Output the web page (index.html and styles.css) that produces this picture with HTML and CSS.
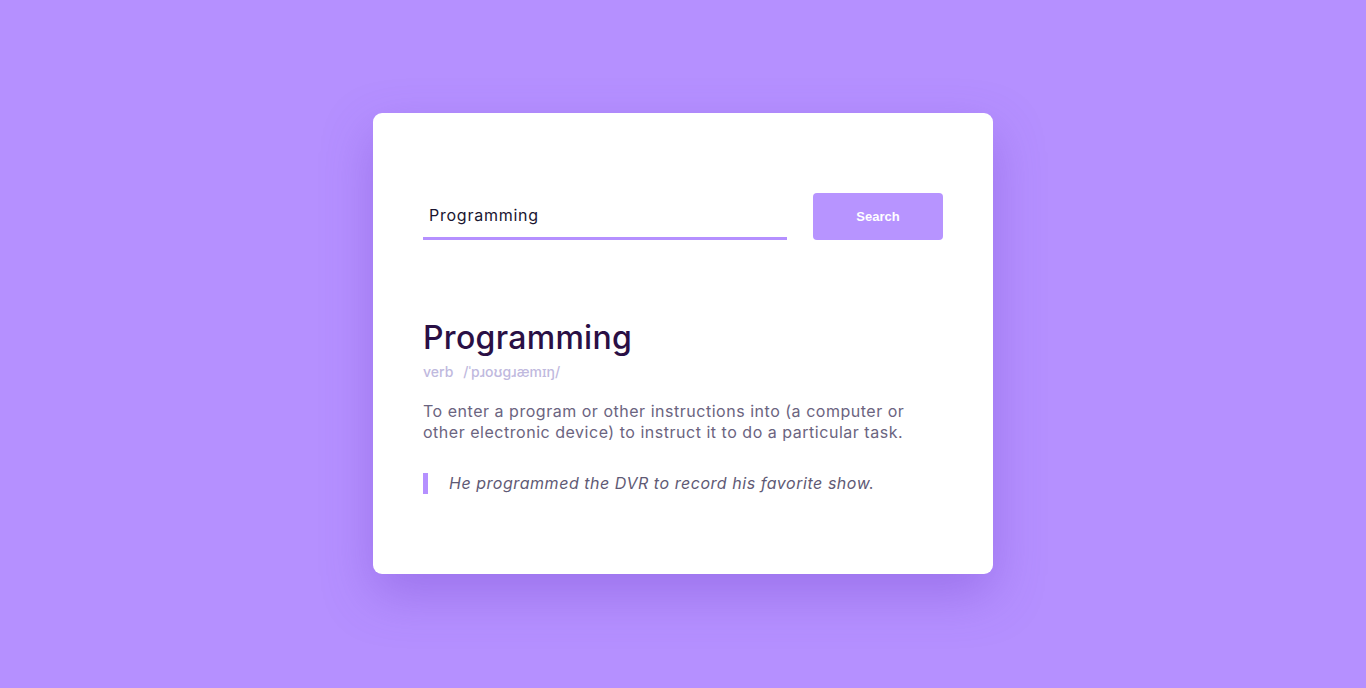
FILE: index.html
```html
<!DOCTYPE html>
<html lang="en">
<head>
<meta charset="utf-8">
<title>Dictionary</title>
<link rel="stylesheet" href="styles.css">
</head>
<body>
<main class="page">
  <section class="card">
    <form class="search">
      <div class="field"><input class="input" type="text" value="Programming"></div>
      <button class="btn" type="button">Search</button>
    </form>
    <article class="result">
      <h1 class="word">Programming</h1>
      <div class="meta"><span class="pos">verb</span><span class="ipa">/ˈpɹoʊɡɹæmɪŋ/</span></div>
      <p class="def">To enter a program or other instructions into (a computer or other electronic device) to instruct it to do a particular task.</p>
      <blockquote class="example">He programmed the DVR to record his favorite show.</blockquote>
    </article>
  </section>
</main>
</body>
</html>
```
FILE: styles.css
```css
* { box-sizing: border-box; }
html, body { margin: 0; height: 100%; }
body {
  background: #b590ff;
  font-family: Inter, "Noto Sans", sans-serif;
}
.page {
  height: 688px;
  display: flex;
  justify-content: center;
  padding-top: 113px;
}
.card {
  width: 620px;
  height: 461px;
  background: #fff;
  border-radius: 9px;
  padding: 80px 50px 0;
  box-shadow: 0 20px 50px rgba(110, 60, 200, 0.35);
}
.search {
  display: flex;
  gap: 26px;
  align-items: flex-start;
}
.field { flex: 1; }
.input {
  width: 100%;
  height: 47px;
  border: none;
  border-bottom: 3px solid #b590ff;
  padding: 0 6px;
  font-family: inherit;
  font-size: 16px;
  letter-spacing: 0.75px;
  color: #1a1530;
  outline: none;
  background: transparent;
}
.btn {
  width: 130px;
  height: 47px;
  border: none;
  border-radius: 4px;
  background: #b794ff;
  color: #fff;
  font-family: "Liberation Sans", Arial, sans-serif;
  font-weight: bold;
  font-size: 13px;
}
.result { margin-top: 78px; }
.word {
  margin: 0;
  font-size: 32px;
  line-height: 40px;
  font-weight: 500;
  letter-spacing: 0.3px;
  color: #2a0f45;
}
.meta {
  margin-top: 5px;
  display: flex;
  gap: 10px;
  font-size: 14px;
  line-height: 18px;
  font-weight: 500;
  color: #c0b9de;
}
.def {
  margin: 20px 0 0;
  font-size: 16px;
  line-height: 21px;
  letter-spacing: 0.52px;
  color: #6b6480;
}
.example {
  margin: 30px 0 0;
  padding-left: 21px;
  border-left: 5px solid #b590ff;
  font-size: 16px;
  line-height: 21px;
  font-style: italic;
  letter-spacing: 0.54px;
  color: #5f5a75;
}
```
